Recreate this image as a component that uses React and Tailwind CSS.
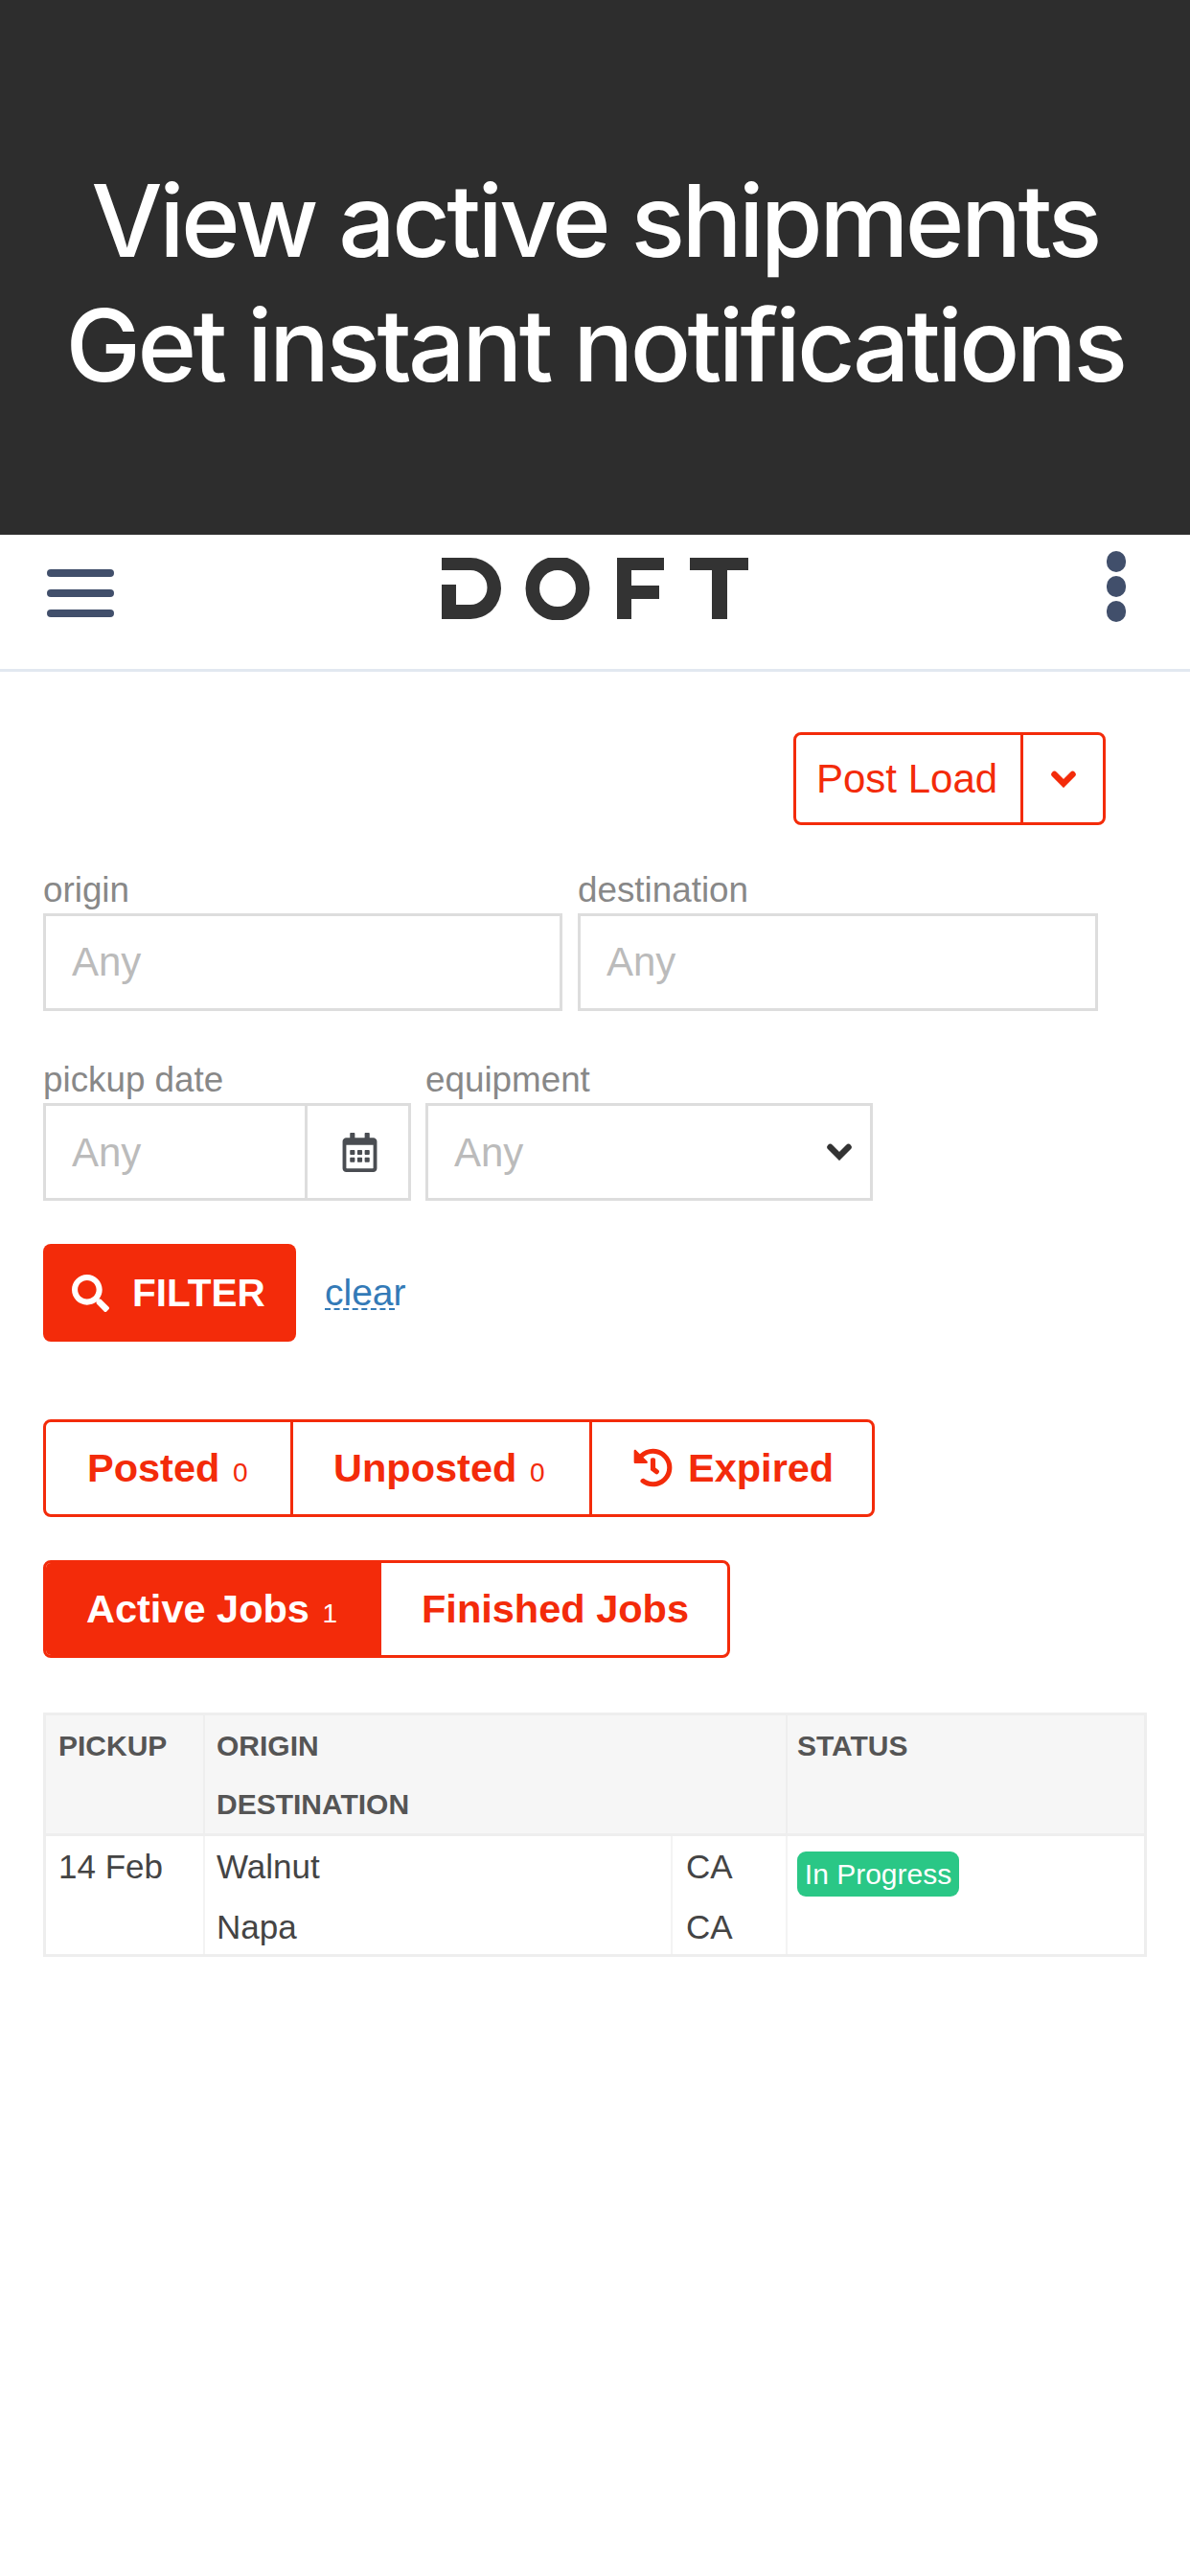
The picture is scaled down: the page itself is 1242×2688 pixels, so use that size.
import React from "react";
import { FaHistory, FaRegCalendarAlt, FaSearch } from "react-icons/fa";

function Logo() {
  return (
    <svg width="320" height="65" viewBox="0 0 320 65" fill="#333333" className="block">
      <path d="M0 0H30A32 32 0 0 1 30 64H0V28H15V49H30A17.5 18 0 0 0 30 13H0Z" />
      <circle cx="121" cy="32" r="26.2" fill="none" stroke="#333333" strokeWidth="14.5" />
      <path d="M183 0H232V13H198V29H227V43H198V64H183Z" />
      <path d="M259 0H320V13H298V64H282V13H259Z" />
    </svg>
  );
}

function Chevron({ className }) {
  return (
    <svg width="26" height="18" viewBox="0 0 26 18" className={className}>
      <path d="M3.5 4L13 13.5L22.5 4" fill="none" stroke="currentColor" strokeWidth="6.5" strokeLinecap="round" strokeLinejoin="miter" />
    </svg>
  );
}

function Field({ label, width }) {
  return (
    <div className={width}>
      <div className="h-[48px] text-[36.8px] leading-[48px] text-[#888888]">{label}</div>
      <input
        placeholder="Any"
        className="block h-[102px] w-full border-[3px] border-[#dddddd] bg-white pl-[27px] text-[42px] outline-none placeholder:text-[#bbbbbb]"
      />
    </div>
  );
}

function Count({ children }) {
  return <span className="ml-[2px] text-[28px] font-normal">{children}</span>;
}

export default function App() {
  return (
    <div className="min-h-[2688px] bg-white font-['Liberation_Sans',Arial,sans-serif] text-[#333333]">
      <div className="h-[558px] bg-[#2d2d2d] pt-[165px] text-center font-['Inter',sans-serif] text-[105px] font-medium leading-[130px] tracking-[-3.6px] text-white">
        <div>View active shipments</div>
        <div>Get instant notifications</div>
      </div>

      <nav className="flex h-[143px] items-start border-b-[3px] border-[#e2e8f0] pl-[49px] pr-[67px]">
        <div className="mt-[36px] flex w-[70px] flex-col gap-[13px]">
          <div className="h-[8px] rounded-full bg-[#414f6b]" />
          <div className="h-[8px] rounded-full bg-[#414f6b]" />
          <div className="h-[8px] rounded-full bg-[#414f6b]" />
        </div>
        <div className="ml-[342px] mt-[24px]">
          <Logo />
        </div>
        <div className="ml-auto mt-[17px] flex w-[20px] flex-col gap-[4px]">
          <div className="h-[22px] rounded-full bg-[#414f6b]" />
          <div className="h-[22px] rounded-full bg-[#414f6b]" />
          <div className="h-[22px] rounded-full bg-[#414f6b]" />
        </div>
      </nav>

      <main className="px-[45px]">
        <div className="mt-[63px] flex justify-end pr-[43px]">
          <div className="flex h-[97px] w-[326px] items-stretch rounded-[8px] border-[3px] border-[#f32b0a] text-[#f32b0a]">
            <div className="flex w-[234px] items-center pl-[21px] text-[42px]">Post Load</div>
            <div className="flex flex-1 items-center justify-center border-l-[3px] border-[#f32b0a]">
              <Chevron />
            </div>
          </div>
        </div>

        <div className="mt-[44px] flex gap-[16px]">
          <Field label="origin" width="w-[542px]" />
          <Field label="destination" width="w-[543px]" />
        </div>

        <div className="mt-[48px] flex gap-[15px]">
          <div className="w-[384px]">
            <div className="h-[48px] text-[36.8px] leading-[48px] text-[#888888]">pickup date</div>
            <div className="flex h-[102px] border-[3px] border-[#dddddd]">
              <input
                placeholder="Any"
                className="w-[270px] bg-white pl-[27px] text-[42px] outline-none placeholder:text-[#bbbbbb]"
              />
              <div className="flex flex-1 items-center justify-center border-l-[3px] border-[#dddddd] pl-[3px] text-[#4a4d52]">
                <FaRegCalendarAlt size={41} />
              </div>
            </div>
          </div>
          <div className="w-[467px]">
            <div className="h-[48px] text-[36.8px] leading-[48px] text-[#888888]">equipment</div>
            <div className="flex h-[102px] items-center justify-between border-[3px] border-[#dddddd] pl-[27px] pr-[19px]">
              <span className="text-[42px] text-[#bbbbbb]">Any</span>
              <Chevron className="text-[#333333]" />
            </div>
          </div>
        </div>

        <div className="mt-[45px] flex items-center gap-[30px]">
          <button className="flex h-[102px] w-[264px] items-center rounded-[8px] bg-[#f32b0a] pl-[30px] text-[40.5px] font-bold text-white">
            <FaSearch size={39} />
            <span className="ml-[24px]">FILTER</span>
          </button>
          <span className="inline-block w-[73px] whitespace-nowrap border-b-2 border-dashed border-[#337ab7] text-[39px] leading-[33px] text-[#337ab7]">
            clear
          </span>
        </div>

        <div className="mt-[81px] flex h-[102px] w-[868px] rounded-[8px] border-[3px] border-[#f32b0a] text-[41.5px] font-bold text-[#f32b0a]">
          <div className="flex w-[255px] items-center pl-[43px]">
            <span className="whitespace-pre">
              Posted <Count>0</Count>
            </span>
          </div>
          <div className="flex w-[312px] items-center border-l-[3px] border-[#f32b0a] pl-[42px]">
            <span className="whitespace-pre">
              Unposted <Count>0</Count>
            </span>
          </div>
          <div className="flex flex-1 items-center border-l-[3px] border-[#f32b0a] pl-[43px]">
            <FaHistory size={41} className="-mt-[2px]" />
            <span className="ml-[16px]">Expired</span>
          </div>
        </div>

        <div className="mt-[45px] flex h-[102px] w-[717px] overflow-hidden rounded-[8px] border-[3px] border-[#f32b0a] text-[41.5px] font-bold">
          <div className="flex w-[350px] items-center bg-[#f32b0a] pl-[42px] text-white">
            <span className="whitespace-pre">
              Active Jobs <Count>1</Count>
            </span>
          </div>
          <div className="flex flex-1 items-center pl-[42px] text-[#f32b0a]">Finished Jobs</div>
        </div>

        <div className="mt-[57px] grid w-[1152px] grid-cols-[164px_488px_120px_374px] border-[3px] border-[#eeeeee] text-[35px] text-[#444444]">
          <div className="h-[126px] border-b-[3px] border-[#eeeeee] bg-[#f6f6f6] pl-[13px] pt-[1px] text-[30px] font-bold leading-[61px] text-[#555555]">
            PICKUP
          </div>
          <div className="col-span-2 h-[126px] border-b-[3px] border-l-2 border-[#eeeeee] bg-[#f6f6f6] pl-[12px] pt-[1px] text-[30px] font-bold leading-[61px] text-[#555555]">
            <div>ORIGIN</div>
            <div>DESTINATION</div>
          </div>
          <div className="h-[126px] border-b-[3px] border-l-2 border-[#eeeeee] bg-[#f6f6f6] pl-[10px] pt-[1px] text-[30px] font-bold leading-[61px] text-[#555555]">
            STATUS
          </div>

          <div className="row-span-2 pl-[13px] leading-[63px]">14 Feb</div>
          <div className="h-[63px] border-l-2 border-[#f3f3f3] pl-[12px] leading-[63px]">Walnut</div>
          <div className="h-[63px] border-l-2 border-[#f3f3f3] pl-[14px] leading-[63px]">CA</div>
          <div className="row-span-2 border-l-2 border-[#f3f3f3] pl-[10px] pt-[12px]">
            <span className="inline-flex h-[47px] w-[169px] items-center justify-center rounded-[9px] bg-[#2ac786] text-[30px] text-white">
              In Progress
            </span>
          </div>
          <div className="h-[60px] border-l-2 border-[#f3f3f3] pl-[12px] leading-[63px]">Napa</div>
          <div className="h-[60px] border-l-2 border-[#f3f3f3] pl-[14px] leading-[63px]">CA</div>
        </div>
      </main>
    </div>
  );
}
